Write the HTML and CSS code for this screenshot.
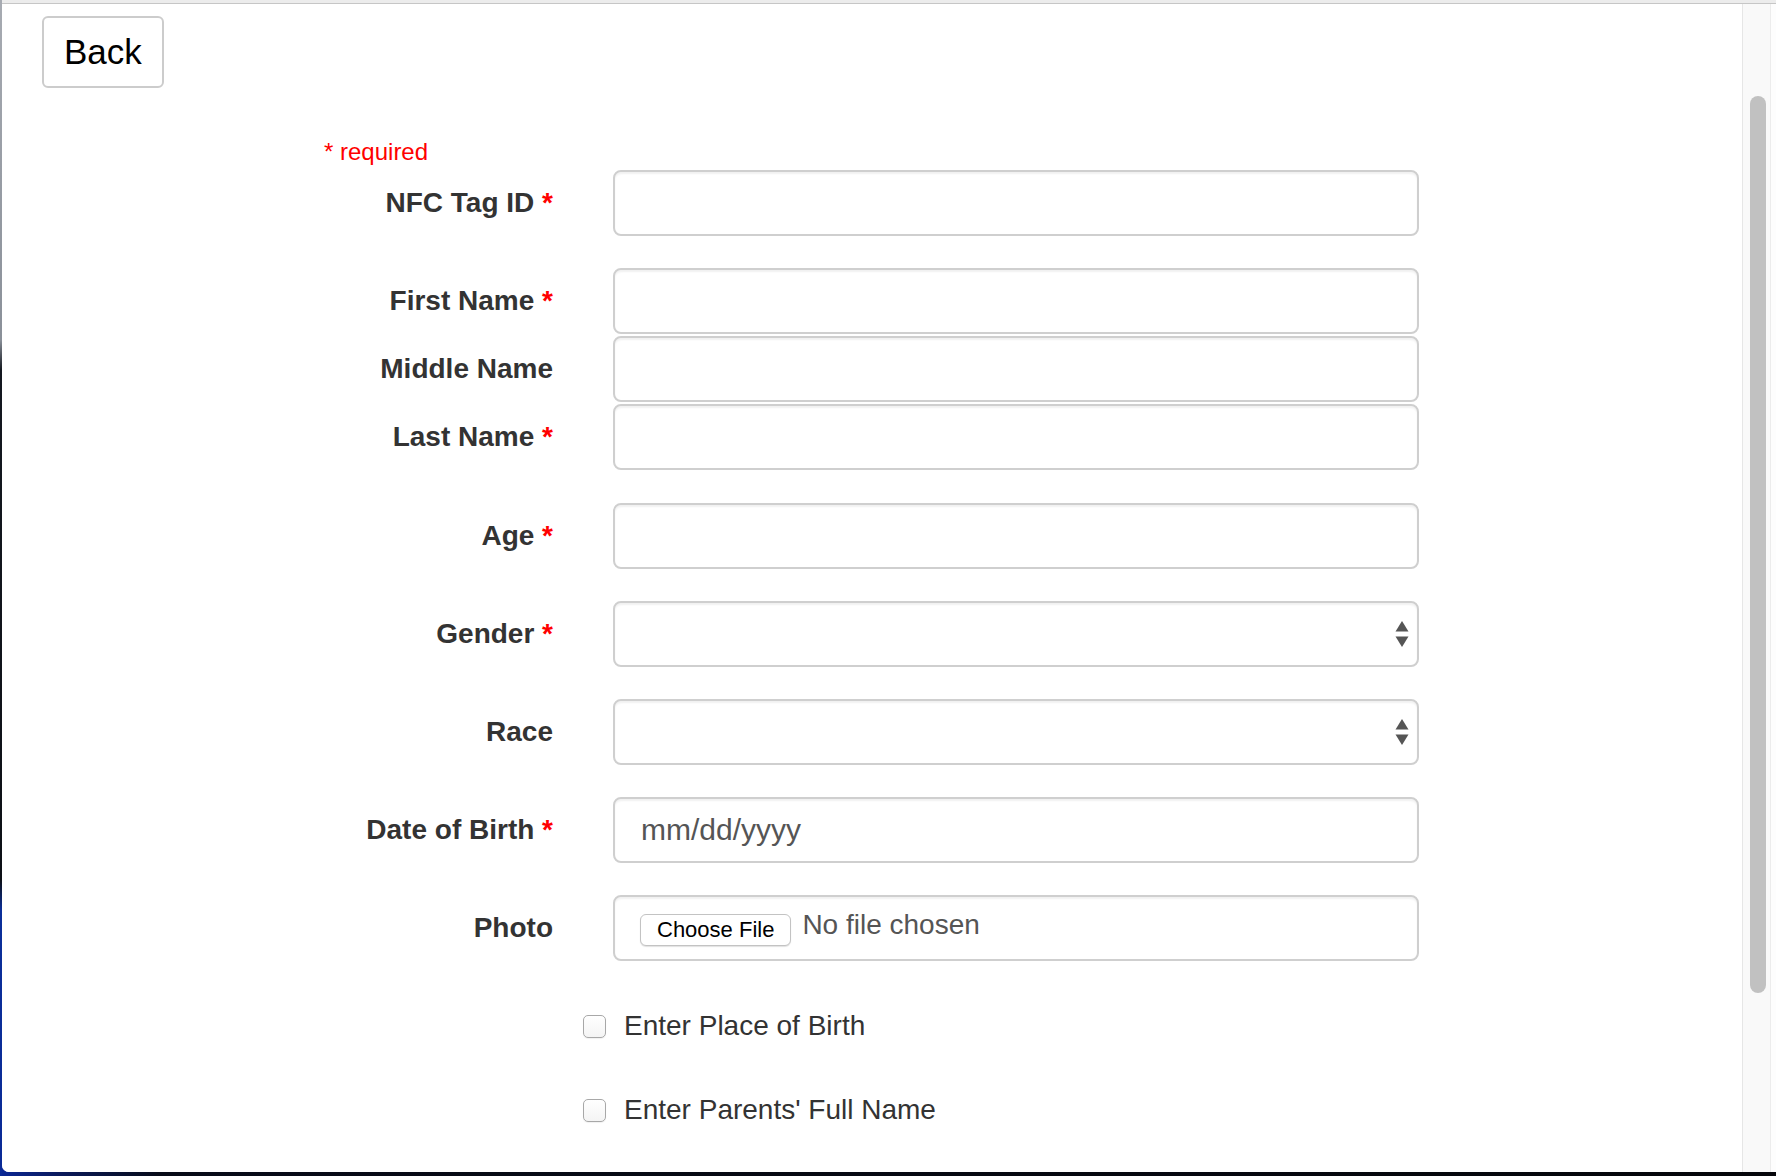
FILE: index.html
```html
<!DOCTYPE html>
<html>
<head>
<meta charset="utf-8">
<link rel="stylesheet" href="styles.css">
</head>
<body>
<div class="window">
  <div class="topbar"></div>
  <div class="viewport">
    <div class="page">
      <button class="btn-back">Back</button>
      <form class="form">
        <div class="required-note">* required</div>

        <div class="form-group">
          <label class="label">NFC Tag ID <span class="star">*</span></label>
          <input class="control" type="text">
        </div>

        <div class="form-group tight">
          <label class="label">First Name <span class="star">*</span></label>
          <input class="control" type="text">
        </div>
        <div class="form-group tight">
          <label class="label">Middle Name</label>
          <input class="control" type="text">
        </div>
        <div class="form-group after-names">
          <label class="label">Last Name <span class="star">*</span></label>
          <input class="control" type="text">
        </div>

        <div class="form-group">
          <label class="label">Age <span class="star">*</span></label>
          <input class="control" type="text">
        </div>

        <div class="form-group">
          <label class="label">Gender <span class="star">*</span></label>
          <div class="control select">
            <svg class="arrows" width="14" height="27" viewBox="0 0 14 27"><path d="M7 0 L13.5 10.5 L0.5 10.5 Z" fill="#555"/><path d="M0.5 15.5 L13.5 15.5 L7 26 Z" fill="#555"/></svg>
          </div>
        </div>

        <div class="form-group">
          <label class="label">Race</label>
          <div class="control select">
            <svg class="arrows" width="14" height="27" viewBox="0 0 14 27"><path d="M7 0 L13.5 10.5 L0.5 10.5 Z" fill="#555"/><path d="M0.5 15.5 L13.5 15.5 L7 26 Z" fill="#555"/></svg>
          </div>
        </div>

        <div class="form-group">
          <label class="label">Date of Birth <span class="star">*</span></label>
          <div class="control date">mm/dd/yyyy</div>
        </div>

        <div class="form-group last">
          <label class="label">Photo</label>
          <div class="control file">
            <span class="file-btn">Choose File</span>
            <span class="file-text">No file chosen</span>
          </div>
        </div>

        <div class="check-row first-check">
          <span class="checkbox"></span>
          <span class="check-text">Enter Place of Birth</span>
        </div>
        <div class="check-row">
          <span class="checkbox"></span>
          <span class="check-text">Enter Parents' Full Name</span>
        </div>
      </form>
    </div>
    <div class="scrollbar">
      <div class="thumb"></div>
    </div>
    <div class="right-edge"></div>
  </div>
</div>
</body>
</html>
```

FILE: styles.css
```css
html, body {
  margin: 0;
  padding: 0;
}

body {
  width: 1776px;
  height: 1176px;
  overflow: hidden;
  background: linear-gradient(90deg, #0a2796 0px, #0a1a5c 60px, #070b18 160px, #05060a 100%);
  font-family: "Liberation Sans", Arial, Helvetica, sans-serif;
  position: relative;
}

body::before {
  content: "";
  position: absolute;
  left: 0;
  top: 0;
  width: 2px;
  height: 1176px;
  background: linear-gradient(180deg, #a7abb2 0px, #8a9099 340px, #141820 370px, #0d1016 880px, #0b2f9a 910px, #0a2a96 100%);
}

.window {
  margin-left: 2px;
  width: 1774px;
  height: 1172px;
  background: #ffffff;
  border-bottom-left-radius: 7px;
  display: flex;
  flex-direction: column;
  overflow: hidden;
}

.topbar {
  height: 3px;
  background: #ececec;
  border-bottom: 1px solid #c6c6c6;
  flex: none;
}

.viewport {
  flex: 1;
  display: flex;
  min-height: 0;
}

.page {
  flex: 1;
  min-width: 0;
  background: #ffffff;
}

.scrollbar {
  width: 27px;
  flex: none;
  background: #f9f9f9;
  border-left: 1px solid #e6e6e6;
  border-right: 1px solid #ececec;
  padding-top: 92px;
  box-sizing: content-box;
}

.thumb {
  margin-left: 7px;
  width: 16px;
  height: 897px;
  border-radius: 8px;
  background: #c1c1c1;
}

.right-edge {
  width: 5px;
  flex: none;
  background: #fdfdfd;
}

.btn-back {
  display: block;
  margin: 12px 0 0 40px;
  padding: 14px 20px;
  height: 72px;
  box-sizing: border-box;
  font-family: "Liberation Sans", Arial, Helvetica, sans-serif;
  font-size: 35px;
  line-height: 40px;
  color: #000;
  background: #fff;
  border: 2px solid #cccccc;
  border-radius: 6px;
}

.form {
  margin: 0;
  padding-left: 322px;
}

.required-note {
  margin-top: 50px;
  height: 28px;
  line-height: 28px;
  font-size: 24px;
  color: #ff0000;
  margin-bottom: 4px;
}

.form-group {
  display: grid;
  grid-template-columns: 229px 806px;
  column-gap: 60px;
  align-items: center;
  height: 66px;
  margin-bottom: 32px;
}

.form-group:first-of-type {
  margin-bottom: 31px;
}

.form-group.tight {
  margin-bottom: 2px;
}

.form-group.after-names {
  margin-bottom: 33px;
}

.form-group.last {
  margin-bottom: 0;
}

.label {
  text-align: right;
  font-weight: bold;
  font-size: 28px;
  color: #333333;
  white-space: nowrap;
}

.star {
  color: #ff0000;
}

.control {
  box-sizing: border-box;
  width: 806px;
  height: 66px;
  margin: 0;
  border: 2px solid #cfcfcf;
  border-radius: 8px;
  background: #ffffff;
  box-shadow: inset 0 2px 2px rgba(0, 0, 0, 0.06);
  font-family: "Liberation Sans", Arial, Helvetica, sans-serif;
  font-size: 28px;
  color: #555555;
  padding: 0 26px;
  outline: none;
}

.select {
  display: flex;
  align-items: center;
  justify-content: flex-end;
  padding-right: 8px;
}

.arrows {
  display: block;
}

.date {
  display: flex;
  align-items: center;
  font-size: 30px;
  color: #555555;
}

.file {
  display: flex;
  align-items: center;
  padding-left: 25px;
}

.file-btn {
  display: inline-block;
  box-sizing: border-box;
  height: 32px;
  line-height: 30px;
  padding: 0 16px;
  font-size: 22px;
  color: #000;
  background: #ffffff;
  border: 1px solid #c3c3c3;
  border-radius: 6px;
  box-shadow: 0 1px 1px rgba(0, 0, 0, 0.12);
  margin-top: 3px;
}

.file-text {
  margin-left: 11px;
  font-size: 28px;
  color: #555555;
  margin-bottom: 7px;
}

.check-row {
  display: flex;
  align-items: center;
  height: 32px;
  margin-left: 259px;
  margin-top: 52px;
}

.check-row.first-check {
  margin-top: 49px;
}

.checkbox {
  width: 23px;
  height: 23px;
  box-sizing: border-box;
  border: 1.5px solid #a8a8a8;
  border-radius: 5px;
  background: linear-gradient(180deg, #ffffff, #f4f4f4);
  box-shadow: 0 1px 1px rgba(0, 0, 0, 0.06);
  flex: none;
}

.check-text {
  margin-left: 18px;
  font-size: 28px;
  color: #333333;
}
```
